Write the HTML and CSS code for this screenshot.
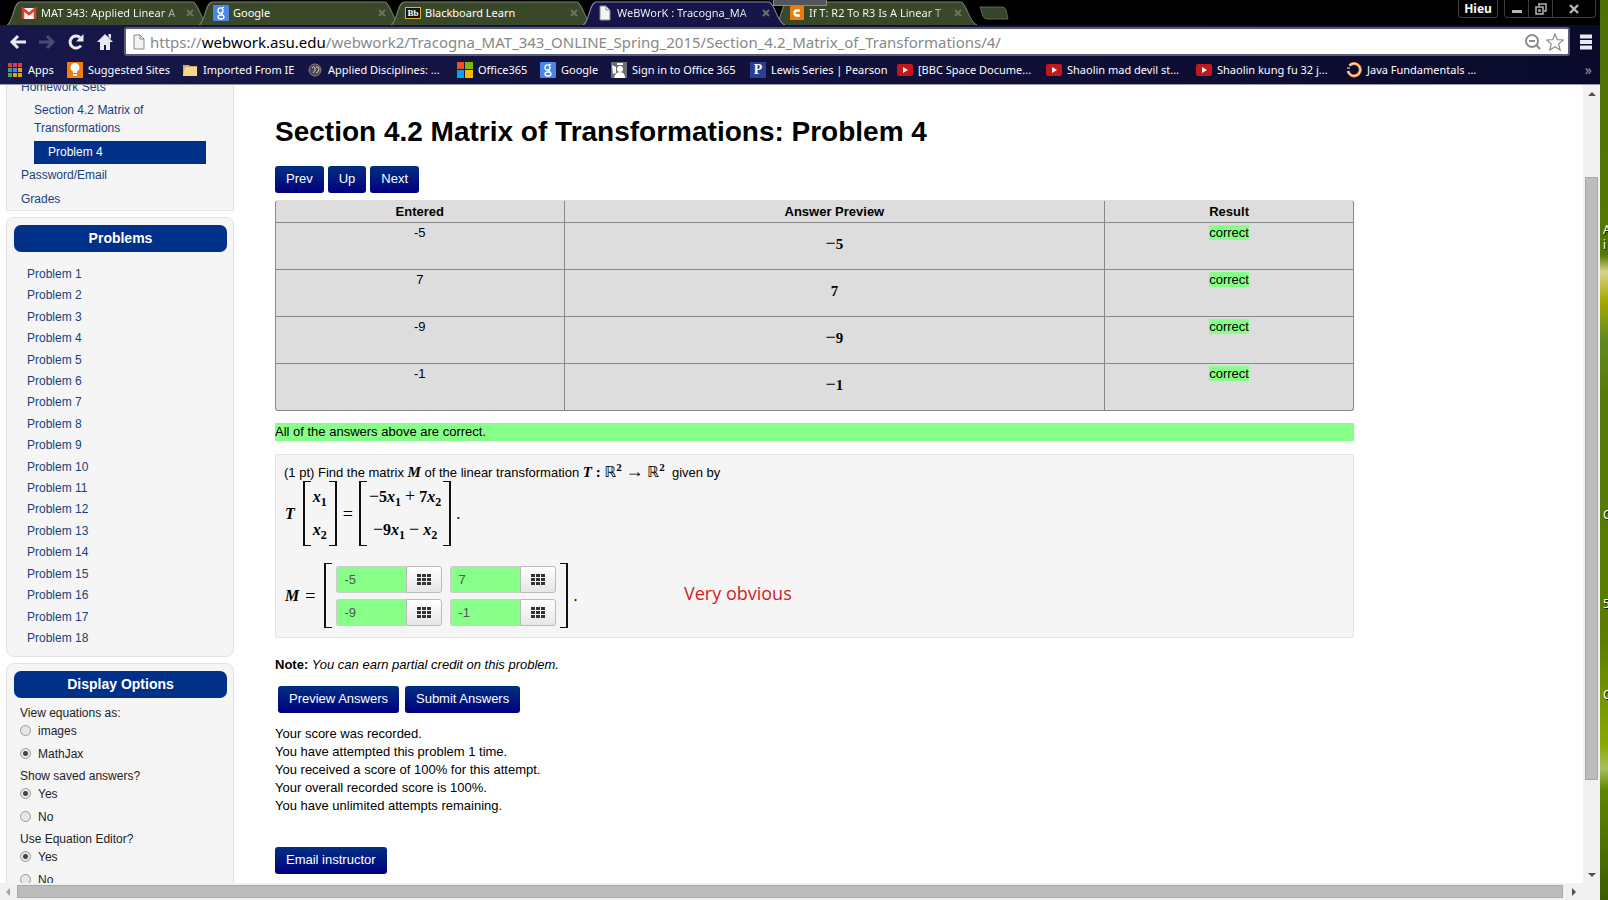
FILE: index.html
```
<!DOCTYPE html>
<html lang="en">
<head>
<meta charset="utf-8">
<title>WeBWorK : Tracogna_MAT_343</title>
<link rel="stylesheet" href="styles.css">
</head>
<body>
<svg class="defs" aria-hidden="true">
  <symbol id="yt" viewBox="0 0 16 14"><rect y="1" width="16" height="12" rx="2" fill="#c4171c"/><path d="M6 4l5 3-5 3z" fill="#fff"/></symbol>
  <symbol id="goog" viewBox="0 0 16 16"><rect width="16" height="16" rx="1" fill="#4a86e8"/><ellipse cx="7.500" cy="5.500" rx="2.500" ry="2.700" fill="none" stroke="#fff" stroke-width="1.300"/><ellipse cx="8" cy="12" rx="3" ry="2" fill="none" stroke="#fff" stroke-width="1.300"/><path d="M9 3l2-1M8 8l2 2" stroke="#fff" stroke-width="1.200"/></symbol>
  <symbol id="sheet" viewBox="0 0 14 16"><path d="M2 1h6l4 4v10H2z" fill="#f4f4f4" stroke="#8a8a8a"/><path d="M8 1v4h4" fill="none" stroke="#8a8a8a"/></symbol>
  <symbol id="pad" viewBox="0 0 14 12"><path d="M0 0h4v3H0zM5 0h4v3H5zM10 0h4v3h-4zM0 4h4v3H0zM5 4h4v3H5zM10 4h4v3h-4zM0 8h4v3H0zM5 8h4v3H5zM10 8h4v3h-4z" fill="#333"/></symbol>
  <symbol id="x" viewBox="0 0 8 8"><path d="M1 1l6 6M7 1L1 7" stroke="#6d7068" stroke-width="2"/></symbol>
</svg>
<div class="desktop">
  <div class="window">
    <header class="chrome">
      <div class="titlebar">
        <div class="tabs">
          <div class="tab"><svg class="tab-bg" viewBox="0 0 200 24" preserveAspectRatio="none"><path d="M0 24C6 22 6 2 13 1H184C190 2 192 22 200 24" /></svg><svg class="ico" viewBox="0 0 16 16"><rect x="1" y="3" width="14" height="11" fill="#f3f3f3"/><path d="M2 14V4l6 5 6-5v10" fill="none" stroke="#d8402f" stroke-width="2.500"/></svg><span class="tab-text fade">MAT 343: Applied Linear A</span><svg class="close"><use href="#x"/></svg></div>
          <div class="tab"><svg class="tab-bg" viewBox="0 0 200 24" preserveAspectRatio="none"><path d="M0 24C6 22 6 2 13 1H184C190 2 192 22 200 24" /></svg><svg class="ico"><use href="#goog"/></svg><span class="tab-text">Google</span><svg class="close"><use href="#x"/></svg></div>
          <div class="tab"><svg class="tab-bg" viewBox="0 0 200 24" preserveAspectRatio="none"><path d="M0 24C6 22 6 2 13 1H184C190 2 192 22 200 24" /></svg><span class="bb">Bb</span><span class="tab-text">Blackboard Learn</span><svg class="close"><use href="#x"/></svg></div>
          <div class="tab active"><svg class="tab-bg" viewBox="0 0 200 24" preserveAspectRatio="none"><path d="M0 24C6 22 6 2 13 1H184C190 2 192 22 200 24" /></svg><svg class="ico"><use href="#sheet"/></svg><span class="tab-text fade">WeBWorK : Tracogna_MA</span><svg class="close"><use href="#x"/></svg></div>
          <div class="tab"><svg class="tab-bg" viewBox="0 0 200 24" preserveAspectRatio="none"><path d="M0 24C6 22 6 2 13 1H184C190 2 192 22 200 24" /></svg><svg class="ico" viewBox="0 0 16 16"><rect x="1" y="1" width="14" height="14" rx="1" fill="#eb7c10"/><path d="M11 5.500H8Q5.500 5.500 5.500 8T8 10.500h3" fill="none" stroke="#fff" stroke-width="2.400"/></svg><span class="tab-text fade">If T: R2 To R3 Is A Linear T</span><svg class="close"><use href="#x"/></svg></div>
          <svg class="newtab" viewBox="0 0 30 14"><path d="M1 1h22q3 0 4 3l2 9H8q-3 0-4-3z" fill="#37452a" stroke="#5c6750"/></svg>
        </div>
        <div class="grip"></div>
        <div class="winctl">
          <button class="user" type="button">Hieu</button>
          <div class="winbtns">
            <button type="button" aria-label="Minimize"><svg viewBox="0 0 12 12"><path d="M1 7h10v3H1z" fill="#b5b5b5"/></svg></button>
            <button type="button" aria-label="Restore"><svg viewBox="0 0 12 12"><path d="M4 3V1h7v7H9M1 4h7v7H1zM4 7h1v1H4z" fill="none" stroke="#b5b5b5" stroke-width="1.500"/></svg></button>
            <button type="button" class="wide" aria-label="Close"><svg viewBox="0 0 12 12"><path d="M2 2l8 8M10 2l-8 8" stroke="#b5b5b5" stroke-width="2.400"/></svg></button>
          </div>
        </div>
      </div>
      <div class="toolbar">
        <button type="button" class="nav" aria-label="Back"><svg viewBox="0 0 18 18"><path d="M17 9H4M9 3L3 9l6 6" fill="none" stroke="#e9e9f2" stroke-width="3"/></svg></button>
        <button type="button" class="nav" aria-label="Forward"><svg viewBox="0 0 18 18"><path d="M1 9h13M9 3l6 6-6 6" fill="none" stroke="#4b4b73" stroke-width="3"/></svg></button>
        <button type="button" class="nav" aria-label="Reload"><svg viewBox="0 0 18 18"><path d="M14 12.500A6 6 0 1 1 13 4.500" fill="none" stroke="#e9e9f2" stroke-width="3"/><path d="M16.500 1v7.500H9z" fill="#e9e9f2"/></svg></button>
        <button type="button" class="nav" aria-label="Home"><svg viewBox="0 0 18 18"><path d="M9 1l8 8h-3v8h-4v-5H8v5H4V9H1zM12.500 1H15v5l-2.500-2z" fill="#e9e9f2"/></svg></button>
        <div class="omnibox">
          <svg class="doc"><use href="#sheet"/></svg>
          <div class="url">https://<b>webwork.asu.edu</b>/webwork2/Tracogna_MAT_343_ONLINE_Spring_2015/Section_4.2_Matrix_of_Transformations/4/</div>
          <svg class="omni-ico" viewBox="0 0 18 18"><circle cx="8" cy="8" r="6" fill="none" stroke="#8d8d8d" stroke-width="2"/><path d="M5 8h6M12.500 12.500L16 16" stroke="#8d8d8d" stroke-width="2"/></svg>
          <svg class="omni-ico" viewBox="0 0 18 18"><path d="M9 1l2.300 5.600 6 .4-4.600 3.900L14.200 17 9 13.700 3.800 17l1.500-6.100L.7 7l6-.4z" fill="#fff" stroke="#8d8d8d" stroke-width="1.200"/></svg>
        </div>
        <button type="button" class="menu" aria-label="Menu"><svg viewBox="0 0 14 16"><path d="M1 2.500h12M1 8h12M1 13.500h12" stroke="#e9e9f2" stroke-width="4"/></svg></button>
      </div>
      <nav class="bookmarks">
        <a href="#" class="w1"><svg class="ico" viewBox="0 0 16 16"><path d="M1 1h4v4H1zM6 1h4v4H6zM11 1h4v4h-4z" fill="#d8404c"/><path d="M1 6h4v4H1zM1 11h4v4H1z" fill="#3ba55c"/><path d="M6 6h4v4H6z" fill="#4385f5"/><path d="M11 6h4v4h-4zM6 11h4v4H6zM11 11h4v4h-4z" fill="#dba520"/></svg>Apps</a>
        <a href="#" class="w2"><svg class="ico" viewBox="0 0 16 16"><rect width="16" height="16" fill="#f47a12"/><path d="M8 1a4.500 4.500 0 0 0-2 8.500V11h4V9.500A4.500 4.500 0 0 0 8 1zM6 12h4v2H6z" fill="#fff"/></svg>Suggested Sites</a>
        <a href="#" class="w3"><svg class="ico" viewBox="0 0 16 16"><path d="M1 3h6l1 1h7v10H1z" fill="#d9a95a"/><path d="M3 5h12v9H1z" fill="#f7d68c"/></svg>Imported From IE</a>
        <a href="#" class="w4"><svg class="ico" viewBox="0 0 16 16"><circle cx="8" cy="8" r="6" fill="#4b4658" stroke="#8d8373"/><path d="M5 6q2-3 3 0t-2 5M9 5q3-1 3 2t-3 4" fill="none" stroke="#d8ccb0"/></svg>Applied Disciplines: ...</a>
        <a href="#" class="w5"><svg class="ico" viewBox="0 0 16 16"><path d="M0 0h7v7H0z" fill="#f25022"/><path d="M8 0h8v7H8z" fill="#7fba00"/><path d="M0 8h7v8H0z" fill="#00a4ef"/><path d="M8 8h8v8H8z" fill="#ffb900"/></svg>Office365</a>
        <a href="#" class="w6"><svg class="ico"><use href="#goog"/></svg>Google</a>
        <a href="#" class="w7"><svg class="ico" viewBox="0 0 16 16"><rect width="16" height="16" fill="#6d6d6d"/><circle cx="9" cy="7" r="3" fill="#fff"/><path d="M3 16q1-6 6-6t5 6zM1 3l4 2v6L2 12zM6 1h6v2H6z" fill="#fff"/></svg>Sign in to Office 365</a>
        <a href="#" class="w8"><span class="pico">P</span>Lewis Series | Pearson</a>
        <a href="#" class="w9"><svg class="ico"><use href="#yt"/></svg>[BBC Space Docume...</a>
        <a href="#" class="w10"><svg class="ico"><use href="#yt"/></svg>Shaolin mad devil st...</a>
        <a href="#" class="w11"><svg class="ico"><use href="#yt"/></svg>Shaolin kung fu 32 j...</a>
        <a href="#" class="w12"><svg class="ico" viewBox="0 0 16 16"><path d="M3.500 3.500A6.200 6.200 0 1 1 2 9" fill="none" stroke="#f29a4a" stroke-width="3"/><path d="M3.500 3.500A6.200 6.200 0 1 1 2 9M1 6h3" fill="none" stroke="#fff3df"/></svg>Java Fundamentals ...</a>
        <span class="more">»</span>
      </nav>
    </header>
    <div class="frame">
      <div class="page">
        <aside class="side">
          <nav class="box first">
            <a href="#" class="l1">Homework Sets</a>
            <a href="#" class="l2">Section 4.2 Matrix of Transformations</a>
            <a href="#" class="cur">Problem 4</a>
            <a href="#" class="l1">Password/Email</a>
            <a href="#" class="l1">Grades</a>
          </nav>
          <nav class="box problems">
            <h2>Problems</h2>
            <ul>
              <li><a href="#">Problem 1</a></li><li><a href="#">Problem 2</a></li><li><a href="#">Problem 3</a></li>
              <li><a href="#">Problem 4</a></li><li><a href="#">Problem 5</a></li><li><a href="#">Problem 6</a></li>
              <li><a href="#">Problem 7</a></li><li><a href="#">Problem 8</a></li><li><a href="#">Problem 9</a></li>
              <li><a href="#">Problem 10</a></li><li><a href="#">Problem 11</a></li><li><a href="#">Problem 12</a></li>
              <li><a href="#">Problem 13</a></li><li><a href="#">Problem 14</a></li><li><a href="#">Problem 15</a></li>
              <li><a href="#">Problem 16</a></li><li><a href="#">Problem 17</a></li><li><a href="#">Problem 18</a></li>
            </ul>
          </nav>
          <form class="box options">
            <h2>Display Options</h2>
            <fieldset><legend>View equations as:</legend>
              <label><input type="radio" name="eq">images</label>
              <label><input type="radio" name="eq" checked>MathJax</label></fieldset>
            <fieldset><legend>Show saved answers?</legend>
              <label><input type="radio" name="sv" checked>Yes</label>
              <label><input type="radio" name="sv">No</label></fieldset>
            <fieldset><legend>Use Equation Editor?</legend>
              <label><input type="radio" name="ed" checked>Yes</label>
              <label><input type="radio" name="ed">No</label></fieldset>
          </form>
        </aside>
        <main class="main">
          <h1>Section 4.2 Matrix of Transformations: Problem 4</h1>
          <div class="pager"><a class="btn" href="#">Prev</a><a class="btn" href="#">Up</a><a class="btn" href="#">Next</a></div>
          <table class="results">
            <colgroup><col class="c1"><col class="c2"><col class="c3"></colgroup>
            <thead><tr><th>Entered</th><th>Answer Preview</th><th>Result</th></tr></thead>
            <tbody>
              <tr><td>-5</td><td class="prev math"><span class="op">−</span>5</td><td><span class="ok">correct</span></td></tr>
              <tr><td>7</td><td class="prev math">7</td><td><span class="ok">correct</span></td></tr>
              <tr><td>-9</td><td class="prev math"><span class="op">−</span>9</td><td><span class="ok">correct</span></td></tr>
              <tr><td>-1</td><td class="prev math"><span class="op">−</span>1</td><td><span class="ok">correct</span></td></tr>
            </tbody>
          </table>
          <div class="allok">All of the answers above are correct.</div>
          <section class="problem">
            <p class="stmt">(1 pt) Find the matrix <span class="math"><i>M</i></span> of the linear transformation <span class="math"><i>T</i> : <span class="bb-r">ℝ</span><sup>2</sup> <span class="op">→</span> <span class="bb-r">ℝ</span><sup>2</sup></span>&nbsp; given by</p>
            <div class="eq math">
              <i class="lead">T</i>
              <div class="matrix col"><span><i>x</i><sub>1</sub></span><span><i>x</i><sub>2</sub></span></div>
              <span class="rel">=</span>
              <div class="matrix col wide"><span><span class="op">−</span>5<i>x</i><sub>1</sub><span class="op bin">+</span>7<i>x</i><sub>2</sub></span><span><span class="op">−</span>9<i>x</i><sub>1</sub><span class="op bin">−</span><i>x</i><sub>2</sub></span></div>
              <span class="dot">.</span>
            </div>
            <div class="eq math second">
              <i class="lead">M</i><span class="rel">=</span>
              <div class="matrix answers">
                <div class="field"><input aria-label="answer 1" value="-5"><button type="button" aria-label="Equation editor 1"><svg><use href="#pad"/></svg></button></div>
                <div class="field"><input aria-label="answer 2" value="7"><button type="button" aria-label="Equation editor 2"><svg><use href="#pad"/></svg></button></div>
                <div class="field"><input aria-label="answer 3" value="-9"><button type="button" aria-label="Equation editor 3"><svg><use href="#pad"/></svg></button></div>
                <div class="field"><input aria-label="answer 4" value="-1"><button type="button" aria-label="Equation editor 4"><svg><use href="#pad"/></svg></button></div>
              </div>
              <span class="dot">.</span>
            </div>
            <span class="remark">Very obvious</span>
          </section>
          <p class="note"><b>Note:</b> <em>You can earn partial credit on this problem.</em></p>
          <div class="submit"><button class="btn" type="button">Preview Answers</button><button class="btn" type="button">Submit Answers</button></div>
          <p class="score">Your score was recorded.<br>You have attempted this problem 1 time.<br>You received a score of 100% for this attempt.<br>Your overall recorded score is 100%.<br>You have unlimited attempts remaining.</p>
          <button class="btn" type="button">Email instructor</button>
        </main>
      </div>
      <div class="vbar"><svg viewBox="0 0 8 4"><path d="M0 4l4-4 4 4z"/></svg><div class="vtrack"><div class="thumb"></div></div><svg viewBox="0 0 8 4"><path d="M0 0l4 4 4-4z"/></svg></div>
      <div class="hbar"><svg viewBox="0 0 4 8"><path d="M4 0L0 4l4 4z" fill="#a3a3a3"/></svg><div class="thumb"></div><svg viewBox="0 0 4 8"><path d="M0 0l4 4-4 4z"/></svg></div>
    </div>
  </div>
  <div class="wallpaper"><span class="w-a">A</span><span class="w-i">i</span><span class="w-c1">C</span><span class="w-5">5</span><span class="w-c2">C</span></div>
</div>
</body>
</html>
```
FILE: styles.css
```
* { box-sizing: border-box; }
body { margin: 0; font: 13px/18px "Liberation Sans", Arial, sans-serif; color: #000; }
button, input { font: inherit; margin: 0; }
a { text-decoration: none; }
h1, h2, p, ul, fieldset { margin: 0; padding: 0; }
.defs { position: absolute; width: 0; height: 0; }
.desktop { display: flex; height: 100vh; overflow: hidden; }
.window { flex: 1; min-width: 0; display: flex; flex-direction: column; }

/* browser frame */
.chrome { font: 11px/16px "Noto Sans", "Open Sans", sans-serif; color: #fff; background: linear-gradient(90deg, #17174a, #0a0a2c); border-bottom: 1px solid #9a9aa8; }
.chrome button { padding: 0; border: 0; background: none; color: inherit; display: flex; align-items: center; justify-content: center; }
.ico { width: 16px; height: 16px; flex: none; }
.titlebar { position: relative; display: flex; justify-content: space-between; height: 25px; background: #000; }
.tabs { display: flex; align-items: flex-end; padding-left: 7px; }
.tab { position: relative; display: flex; align-items: center; gap: 4px; width: 202px; height: 24px; margin-right: -10px; padding: 0 15px 0 14px; }
.tab > * { position: relative; }
.tab .tab-bg { position: absolute; inset: 0; width: 100%; height: 100%; }
.tab-bg path { fill: #3a482a; stroke: #77806c; }
.active { z-index: 1; }
.active .tab-bg path { fill: #15154a; stroke: #8a8aa6; }
.tab-text { flex: 1; white-space: nowrap; }
.fade { color: transparent; background: linear-gradient(90deg, #fff 85%, #667 100%); -webkit-background-clip: text; background-clip: text; }
.close { width: 8px; height: 8px; flex: none; }
.bb { width: 16px; font: bold 9px/10px "Liberation Serif", serif; text-align: center; border: 1px solid #e0b52c; background: #111; }
.newtab { width: 30px; height: 14px; margin: 0 0 5px 12px; }
.grip { position: absolute; left: calc(50% - 27px); top: 0; width: 54px; height: 6px; background: #55565c; border: 1px solid #8b8b90; border-top: 0; z-index: 2; }
.winctl { display: flex; align-items: flex-start; gap: 6px; padding-right: 4px; }
.winctl .user { height: 18px; width: 40px; font-size: 12px; font-weight: bold; border: 1px solid #3c3c3c; border-top: 0; border-radius: 0 0 4px 4px; }
.winbtns { display: flex; border: 1px solid #3c3c3c; border-top: 0; border-radius: 0 0 4px 4px; }
.winctl .winbtns button { width: 24px; height: 17px; border-right: 1px solid #3c3c3c; }
.winctl .winbtns .wide { width: 42px; border: 0; }
.winbtns svg { width: 12px; height: 12px; }
.toolbar { display: flex; align-items: center; height: 33px; padding: 1px 6px 1px 8px; }
.toolbar .nav { width: 29px; padding-right: 10px; flex: none; }
.nav svg { width: 18px; height: 18px; flex: none; }
.omnibox { flex: 1; min-width: 0; display: flex; align-items: center; height: 29px; margin-right: 8px; padding: 0 4px 0 6px; background: #fff; border: 2px solid #5b5b73; border-radius: 3px; gap: 4px; }
.doc { width: 14px; height: 16px; }
.url { flex: 1; white-space: nowrap; font-size: 15px; line-height: 22px; color: #888; }
.url b { font-weight: normal; color: #000; }
.omni-ico { width: 18px; height: 18px; }
.toolbar .menu { width: 16px; }
.menu svg { width: 14px; height: 16px; }
.bookmarks { display: flex; align-items: center; height: 26px; padding: 0 8px 2px 7px; white-space: nowrap; }
.bookmarks a { display: flex; gap: 5px; align-items: center; color: #fff; flex: none; }
.pico { width: 16px; background: #2c3e94; text-align: center; font: bold 14px/16px "Liberation Serif", serif; }
.w1 { width: 60px; } .w2 { width: 115px; } .w3 { width: 125px; } .w4 { width: 150px; } .w5 { width: 83px; } .w6 { width: 71px; }
.w7 { width: 139px; } .w8 { width: 147px; } .w9 { width: 149px; } .w10 { width: 150px; } .w11 { width: 150px; }
.more { margin-left: auto; font-size: 14px; color: #9a9aa8; }

/* page viewport */
.frame { flex: 1; min-height: 0; display: grid; grid-template: minmax(0, 1fr) 17px / minmax(0, 1fr) 17px; background: #f1f1f1; }
.page { display: flex; align-items: flex-start; gap: 41px; overflow: hidden; background: #fff; padding: 0 229px 0 6px; }
.side { width: 228px; flex: none; display: flex; flex-direction: column; gap: 6px; font-size: 12px; }
.side a { color: #17427f; }
.box { background: #f5f5f5; border: 1px solid #e3e3e3; border-radius: 8px; padding: 7px 6px 7px 7px; }
.box h2 { font-size: 14px; line-height: 27px; text-align: center; color: #fff; background: #003087; border-radius: 7px; }
.first { display: flex; flex-direction: column; gap: 6px; margin-top: -7px; padding: 0 27px 2px 14px; border-top: 0; border-radius: 0; }
.first .l2 { margin: -1px 60px -2px 13px; }
.first .cur { margin: 0 0 -4px 13px; padding-left: 14px; line-height: 23px; color: #fff; background: #003087; }
.problems { display: flex; flex-direction: column; min-height: 440px; }
.problems ul { flex: 1; display: flex; flex-direction: column; justify-content: space-between; list-style: none; padding: 13px 0 2px 13px; }
.options { height: 240px; color: #222; }
.options fieldset { border: 0; padding-left: 6px; }
.options fieldset:first-of-type { margin-top: 6px; }
.options fieldset + fieldset { margin-top: 2px; }
.options legend { padding: 0; }
.options label { display: flex; align-items: center; gap: 7px; height: 23px; }
.options label:first-of-type { height: 17px; margin-bottom: 3px; }
.options input { appearance: none; width: 11px; height: 11px; border: 1px solid #999; border-radius: 50%; background: #e6e6e6; }
.options input:checked { background: radial-gradient(circle, #444 0 2px, #e6e6e6 3px); }

.main { flex: 1; min-width: 0; }
h1 { font-size: 28px; line-height: 36px; margin-top: 29px; }
.btn { display: inline-block; padding: 4px 11px 5px; border: 0; border-radius: 3px; color: #fff; line-height: 18px; background: linear-gradient(#003080, #000080); }
.pager { display: flex; gap: 4px; margin: 16px 0 7px; }
.results { width: 100%; table-layout: fixed; border-collapse: separate; border-spacing: 0; background: #ddd; border: 1px solid #888; border-top-color: #ddd; border-radius: 3px; text-align: center; }
.c1 { width: 26.700%; } .c2 { width: 50.200%; } .c3 { width: 23.100%; }
.results th { height: 21px; padding: 0; }
.results td { height: 47px; padding: 1px 0; vertical-align: top; border-top: 1px solid #888; }
.results th + th, .results td + td { border-left: 1px solid #888; }
.results td.prev { padding-top: 12px; }
.ok, .allok { background: #8f8; }
.allok { margin: 12px 0 13px; }
.math { font-family: "Liberation Serif", "Times New Roman", serif; font-size: 15px; font-weight: bold; line-height: 18px; }
.math sup, .math sub { font-size: 11px; line-height: 0; }
.op { font-weight: normal; font-size: 18px; line-height: 0; }
.bin { padding: 0 4px; }
.bb-r { font-family: "DejaVu Sans", sans-serif; font-weight: normal; }
.problem { position: relative; border: 1px solid #e3e3e3; background: #f5f5f5; border-radius: 2px; padding: 8px 8px 9px; }
.eq { display: flex; align-items: center; font-size: 16px; }
.stmt + .eq { margin-top: -1px; }
.eq sub { font-size: 12px; }
.rel { padding: 0 6px; font-weight: normal; font-size: 18px; }
.dot { padding-left: 5px; font-weight: normal; }
.matrix { position: relative; height: 65px; }
.matrix::before, .matrix::after { content: ""; position: absolute; top: 0; bottom: 0; width: 6px; border: 2px solid #111; border-width: 1px 0 1px 2px; }
.matrix::before { left: 0; }
.matrix::after { right: 0; border-width: 1px 2px 1px 0; }
.col { display: flex; flex-direction: column; justify-content: space-between; text-align: center; padding: 7px 10px; }
.lead { padding: 0 8px 0 1px; }
.eq.second { margin-top: 17px; }
.second .lead { padding-right: 0; }
.answers { display: grid; grid-template-columns: auto auto; gap: 6px 8px; padding: 3px 12px; margin-left: 3px; font: 13px/18px "Liberation Sans", Arial, sans-serif; }
.field { display: flex; height: 27px; }
.field input { width: 70px; padding: 0 7px; color: #555; background: #8f8; border: 1px solid #ccc; border-right: 0; border-radius: 3px 0 0 3px; }
.field button { width: 36px; padding: 0; display: flex; align-items: center; justify-content: center; border: 1px solid #bbb; border-radius: 0 3px 3px 0; background: linear-gradient(#fff, #e6e6e6); }
.field svg { width: 14px; height: 12px; }
.remark { position: absolute; left: 408px; top: 126px; font: 18px/24px "Open Sans", sans-serif; color: #d01c24; }
.note { margin-top: 18px; }
.submit { display: flex; gap: 6px; margin: 12px 0 12px 3px; }
.score { margin-bottom: 32px; }

/* scroll bars */
.vbar { display: flex; flex-direction: column; align-items: center; justify-content: space-between; padding: 7px 0 6px; }
.vbar svg { width: 8px; height: 4px; fill: #505050; }
.vtrack { flex: 1; width: 13px; padding-top: 81px; padding-bottom: 93px; display: flex; }
.thumb { flex: 1; background: #bcbcbc; border: 1px solid #a8a8a8; }
.hbar { display: flex; align-items: center; gap: 7px; padding: 0 7px 0 6px; }
.hbar svg { width: 4px; height: 8px; fill: #505050; }
.hbar .thumb { height: 13px; margin-right: 2px; }

/* strip of desktop beside the window */
.wallpaper { position: relative; width: 8px; overflow: hidden; color: #fff; font: 12px/16px "Noto Sans", sans-serif; background: linear-gradient(#4f6f06, #557804 255px, #d8d58a 272px, #a9a800 300px, #5f8a20 340px, #55790a 400px, #5c7d00 640px, #8aa800 745px, #a8c060 768px, #5f8600 790px, #3c5c04); }
.wallpaper span { position: absolute; left: 3px; text-shadow: 1px 1px 1px #000; }
.wallpaper .w-a { top: 222px; } .wallpaper .w-i { top: 237px; } .wallpaper .w-c1 { top: 507px; }
.wallpaper .w-5 { top: 596px; } .wallpaper .w-c2 { top: 687px; }
```
